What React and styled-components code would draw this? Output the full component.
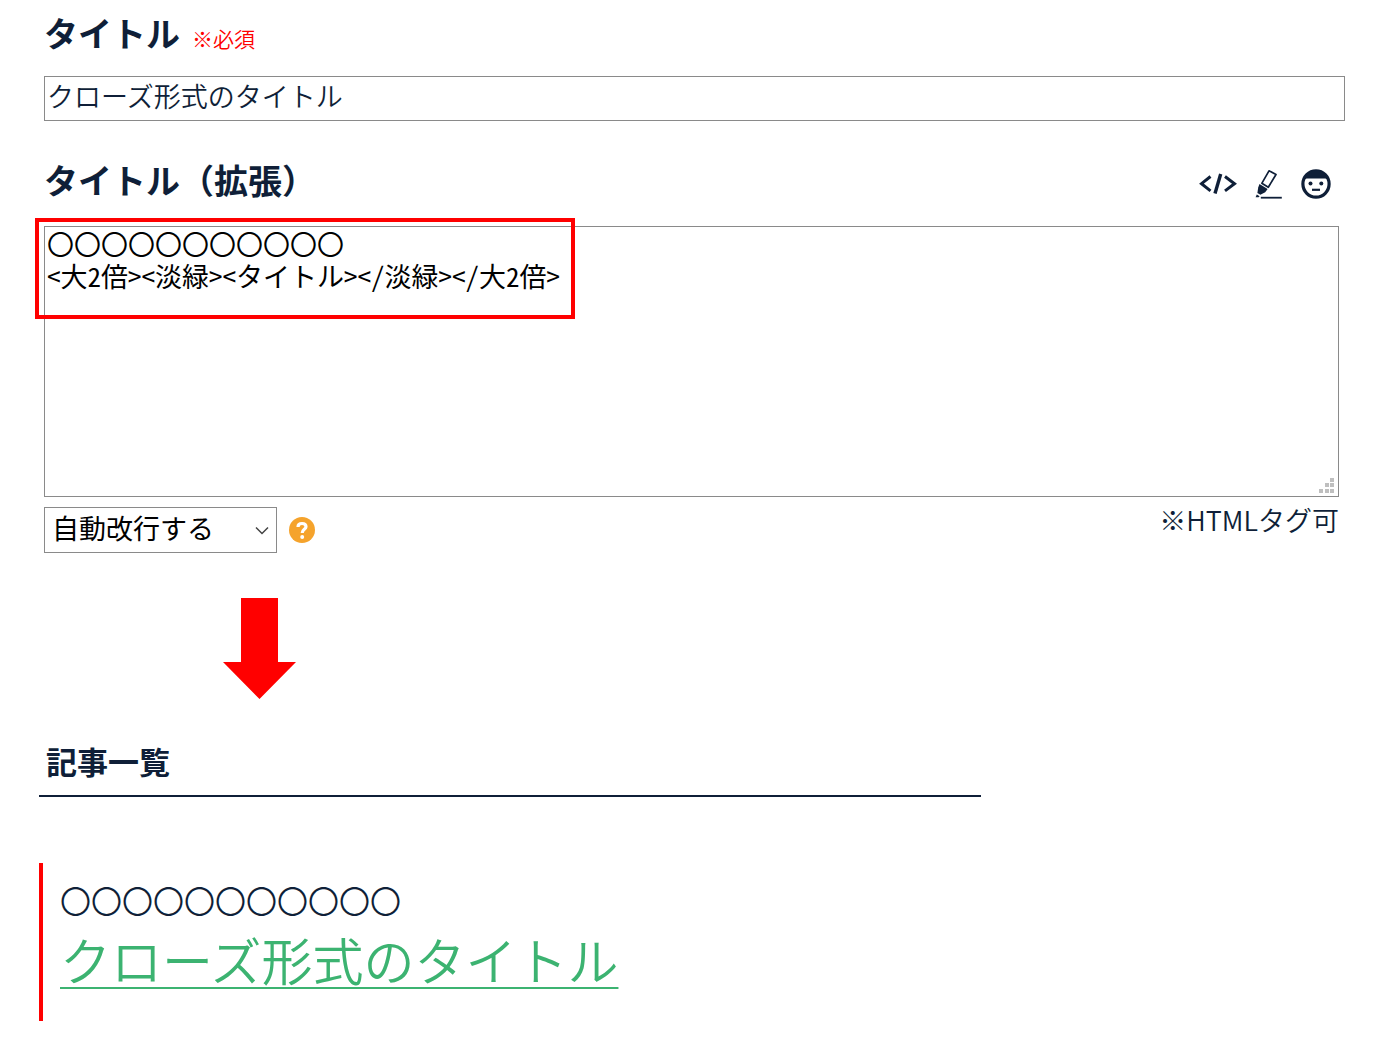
import { useState } from "react";
import styled, { createGlobalStyle } from "styled-components";

const GlobalStyle = createGlobalStyle`
  * {
    box-sizing: border-box;
  }
  body {
    margin: 0;
    background-color: #fff;
    color: #0f1f38;
    font-family: "Noto Sans CJK JP", sans-serif;
  }
`;

const Page = styled.main`
  padding: 10px 38px 24px 39px;
`;

const Form = styled.form`
  padding-left: 5px;
`;

// HeadingRow holds the label on the left and the optional tools on the right.
const HeadingRow = styled.div`
  display: flex;
  align-items: center;
  justify-content: space-between;
  height: 50px;
  margin-top: ${(props) => (props.$spaced ? "34px" : "0")};
  margin-bottom: ${(props) => (props.$spaced ? "21px" : "16px")};
  padding-right: 14px;
`;

const Label = styled.label`
  font-size: 34px;
  font-weight: 700;
  line-height: 50px;
`;

const Required = styled.span`
  margin-left: 12px;
  color: #f00;
  font-size: 21px;
  font-weight: 350;
`;

const TextInput = styled.input`
  display: block;
  width: 100%;
  height: 45px;
  padding: 0 2px 6px;
  border: 1px solid #8a8a8a;
  border-radius: 0;
  background-color: #fff;
  color: inherit;
  font-family: inherit;
  font-size: 27px;
  font-weight: 350;
`;

const Tools = styled.div`
  display: flex;
  align-items: center;
  gap: 18px;
  padding-top: 8px;
`;

const ToolButton = styled.button`
  display: flex;
  padding: 0;
  border: 0;
  background: none;
  color: inherit;
  cursor: pointer;
`;

// AreaColumn is a bit narrower than the title input above it.
const AreaColumn = styled.div`
  margin-right: 6px;
`;

const AreaWrap = styled.div`
  position: relative;
`;

const TextArea = styled.textarea`
  display: block;
  width: 100%;
  height: 271px;
  padding: 1px 2px;
  border: 1px solid #8a8a8a;
  border-radius: 0;
  background-color: #fff;
  color: #000;
  font-family: "Noto Sans Mono CJK JP", "Noto Sans CJK JP", monospace;
  font-size: 27px;
  line-height: 32px;
  resize: vertical;
  &::-webkit-resizer {
    display: none;
  }
`;

// Highlight is the red frame drawn on top of the first lines.
const Highlight = styled.div`
  position: absolute;
  top: -8px;
  left: -9px;
  width: 540px;
  height: 101px;
  border: 4px solid #f00;
  pointer-events: none;
`;

const Grip = styled.svg`
  position: absolute;
  right: 5px;
  bottom: 4px;
  pointer-events: none;
`;

const OptionsRow = styled.div`
  display: flex;
  align-items: flex-start;
  justify-content: space-between;
  margin-top: 10px;
`;

const SelectGroup = styled.div`
  display: flex;
  align-items: center;
  gap: 12px;
`;

const SelectWrap = styled.div`
  position: relative;
`;

const Select = styled.select`
  display: block;
  width: 233px;
  height: 46px;
  padding: 0 32px 6px 7px;
  border: 1px solid #8a8a8a;
  border-radius: 0;
  background-color: #fff;
  color: #000;
  font-family: inherit;
  font-size: 27px;
  appearance: none;
`;

const Chevron = styled.svg`
  position: absolute;
  right: 8px;
  top: 19px;
  pointer-events: none;
`;

const Note = styled.span`
  font-size: 27px;
  font-weight: 350;
  line-height: 26px;
`;

const ArrowDown = styled.svg`
  display: block;
  margin: 45px 0 0 184px;
`;

const ArticleList = styled.section`
  max-width: 942px;
  margin-top: 38px;
`;

const ListTitle = styled.h2`
  margin: 0;
  padding: 0 7px 10px;
  border-bottom: 2px solid #0f1f38;
  font-size: 31px;
  font-weight: 700;
  line-height: 48px;
`;

const Article = styled.article`
  margin-top: 66px;
  padding: 13px 17px 26px;
  border-left: 4px solid #f00;
`;

const Lead = styled.p`
  margin: 0;
  font-size: 31px;
  font-weight: 350;
  line-height: 48px;
`;

const ArticleLink = styled.a`
  display: inline-block;
  color: #3cb371;
  font-size: 51px;
  font-weight: 350;
  line-height: 71px;
  text-decoration: underline;
  text-decoration-thickness: 2px;
  text-underline-offset: 6px;
`;

const CodeIcon = () => (
  <svg width="38" height="22" viewBox="0 0 38 22" fill="none" stroke="currentColor" strokeWidth="3">
    <path d="M11.500 3.500 2.500 10.700l9 7.200M26 3.500l9.500 7.200-9.500 7.200" />
    <path d="M21.700 1 16 20.500" strokeWidth="3.400" />
  </svg>
);

const MarkerIcon = () => (
  <svg width="28" height="30" viewBox="0 0 28 30">
    <path d="M14 1.800 21 5.500 13.300 18.300 6.800 14.300Z" fill="none" stroke="currentColor" strokeWidth="1.700" strokeLinejoin="round" />
    <path d="M4.500 15 12.600 20 10.200 23.300 5.400 25.800 2.400 24 3.200 18.500Z" fill="currentColor" />
    <path d="M1.800 25.500 4.600 27.200 3.600 28.300H0.600Z" fill="currentColor" />
    <path d="M5.800 28.700H26.800" stroke="currentColor" strokeWidth="1.800" />
  </svg>
);

const FaceIcon = () => (
  <svg width="30" height="30" viewBox="0 0 30 30">
    <circle cx="15" cy="15" r="13.100" fill="none" stroke="currentColor" strokeWidth="3.200" />
    <path d="M3 11.500C5 4 10 1.500 15 1.500S25 4 27 11.500C26 9.700 24.500 9.600 23 9.600H7C5.500 9.600 4 9.700 3 11.500Z" fill="currentColor" />
    <circle cx="9.500" cy="14.500" r="2" fill="currentColor" />
    <circle cx="20.300" cy="14.500" r="2" fill="currentColor" />
    <path d="M11 20.800H19" stroke="currentColor" strokeWidth="2.200" />
  </svg>
);

const HelpIcon = () => (
  <svg width="26" height="26" viewBox="0 0 26 26">
    <circle cx="13" cy="13" r="13" fill="#f5a32c" />
    <path d="M9 10C9 7.700 10.600 6.500 13 6.500S17 7.700 17 9.700C17 12.400 13.200 12.400 13.200 16" fill="none" stroke="#fff" strokeWidth="3.200" />
    <circle cx="13.200" cy="20" r="2" fill="#fff" />
  </svg>
);

const gripDots = [
  [11, 0],
  [6, 5],
  [11, 5],
  [0, 11],
  [6, 11],
  [11, 11],
];

export default function App() {
  const [title, setTitle] = useState("クローズ形式のタイトル");
  const [extended, setExtended] = useState(
    "〇〇〇〇〇〇〇〇〇〇〇\n<大2倍><淡緑><タイトル></淡緑></大2倍>"
  );

  return (
    <>
      <GlobalStyle />
      <Page>
        <Form>
          <HeadingRow>
            <Label htmlFor="title">
              タイトル
              <Required>※必須</Required>
            </Label>
          </HeadingRow>
          <TextInput id="title" type="text" required value={title} onChange={(ev) => setTitle(ev.target.value)} />

          <HeadingRow $spaced>
            <Label htmlFor="extended">タイトル（拡張）</Label>
            <Tools>
              <ToolButton type="button" aria-label="HTMLタグ">
                <CodeIcon />
              </ToolButton>
              <ToolButton type="button" aria-label="マーカー">
                <MarkerIcon />
              </ToolButton>
              <ToolButton type="button" aria-label="顔文字">
                <FaceIcon />
              </ToolButton>
            </Tools>
          </HeadingRow>

          <AreaColumn>
            <AreaWrap>
              <TextArea
                id="extended"
                spellCheck={false}
                value={extended}
                onChange={(ev) => setExtended(ev.target.value)}
              />
              <Highlight />
              <Grip width="15" height="15" viewBox="0 0 15 15" fill="#bfbfbf">
                {gripDots.map(([x, y]) => (
                  <rect key={`${x}-${y}`} x={x} y={y} width="4" height="4" />
                ))}
              </Grip>
            </AreaWrap>
            <OptionsRow>
              <SelectGroup>
                <SelectWrap>
                  <Select aria-label="改行" defaultValue="auto">
                    <option value="auto">自動改行する</option>
                  </Select>
                  <Chevron width="14" height="9" viewBox="0 0 14 9" fill="none" stroke="#444" strokeWidth="1.500">
                    <path d="M1 1.500 7 7.500 13 1.500" />
                  </Chevron>
                </SelectWrap>
                <ToolButton type="button" aria-label="ヘルプ">
                  <HelpIcon />
                </ToolButton>
              </SelectGroup>
              <Note>※HTMLタグ可</Note>
            </OptionsRow>
          </AreaColumn>
        </Form>

        <ArrowDown width="73" height="101" viewBox="0 0 73 101" fill="#f00">
          <path d="M18 0H55V64H73L36.500 101 0 64H18Z" />
        </ArrowDown>

        <ArticleList>
          <ListTitle>記事一覧</ListTitle>
          <Article>
            <Lead>〇〇〇〇〇〇〇〇〇〇〇</Lead>
            <ArticleLink href="#article">クローズ形式のタイトル</ArticleLink>
          </Article>
        </ArticleList>
      </Page>
    </>
  );
}
